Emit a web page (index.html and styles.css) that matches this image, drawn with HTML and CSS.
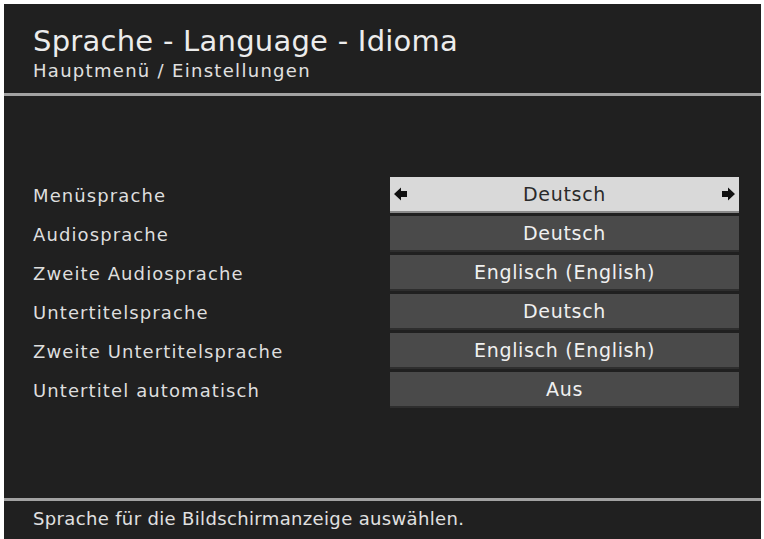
FILE: index.html
```html
<!DOCTYPE html>
<html lang="de">
<head>
    <meta charset="UTF-8">
    <meta name="viewport" content="width=device-width, initial-scale=1.0">
    <title>Sprache - Language - Idioma</title>
    <link rel="stylesheet" href="styles.css">
</head>
<body>

    <div class="screen">
        <div class="header">
            <h1>Sprache - Language - Idioma</h1>
            <p class="path">Hauptmenü / Einstellungen</p>
        </div>

        <div class="settings">
            <div class="row">
                <span class="label">Menüsprache</span>
                <div class="value selected">
                    <svg class="arrow" width="16" height="16" viewBox="0 0 16 16"><path d="M1 8 L8 1.5 L8 5 L14 5 L14 11 L8 11 L8 14.5 Z" fill="#111"/></svg>
                    <span>Deutsch</span>
                    <svg class="arrow" width="16" height="16" viewBox="0 0 16 16"><path d="M15 8 L8 1.5 L8 5 L2 5 L2 11 L8 11 L8 14.5 Z" fill="#111"/></svg>
                </div>
            </div>
            <div class="row">
                <span class="label">Audiosprache</span>
                <div class="value"><span>Deutsch</span></div>
            </div>
            <div class="row">
                <span class="label">Zweite Audiosprache</span>
                <div class="value"><span>Englisch (English)</span></div>
            </div>
            <div class="row">
                <span class="label">Untertitelsprache</span>
                <div class="value"><span>Deutsch</span></div>
            </div>
            <div class="row">
                <span class="label">Zweite Untertitelsprache</span>
                <div class="value"><span>Englisch (English)</span></div>
            </div>
            <div class="row">
                <span class="label">Untertitel automatisch</span>
                <div class="value"><span>Aus</span></div>
            </div>
        </div>

        <div class="footer">
            Sprache für die Bildschirmanzeige auswählen.
        </div>
    </div>

</body>
</html>
```

FILE: styles.css
```css
body {
    margin: 0;
    padding: 0;
    background-color: #ffffff;
    font-family: "DejaVu Sans", "Liberation Sans", sans-serif;
}
.screen {
    margin: 4px 0 0 4px;
    width: 757px;
    height: 535px;
    background-color: #202020;
    display: flex;
    flex-direction: column;
    color: #e6e6e6;
}
.header {
    height: 89px;
    padding-left: 29px;
    border-bottom: 3px solid #a2a2a2;
}
h1 {
    margin: 0;
    padding-top: 19px;
    font-size: 29px;
    font-weight: normal;
    letter-spacing: 0.25px;
    line-height: 36px;
    color: #ececec;
}
.path {
    margin: 0;
    font-size: 18px;
    letter-spacing: 1.3px;
    line-height: 24px;
    color: #e0e0e0;
}
.settings {
    flex: 1;
    padding: 81px 22px 0 29px;
    display: flex;
    flex-direction: column;
    gap: 3px;
}
.row {
    display: flex;
    align-items: center;
    height: 36px;
}
.label {
    width: 357px;
    font-size: 18px;
    letter-spacing: 1.1px;
    color: #dedede;
}
.value {
    width: 349px;
    height: 36px;
    box-sizing: border-box;
    background-color: #4a4a4a;
    border-bottom: 2px solid #2e2e2e;
    display: flex;
    align-items: center;
    justify-content: center;
    font-size: 19px;
    letter-spacing: 0.7px;
    color: #f0f0f0;
}
.value.selected {
    background-color: #d9d9d9;
    color: #2a2a2a;
    justify-content: space-between;
    padding: 0 3px;
    border-bottom: 2px solid #8a8a8a;
}
.footer {
    height: 38px;
    border-top: 3px solid #a2a2a2;
    padding-left: 29px;
    font-size: 18px;
    letter-spacing: 0.35px;
    line-height: 36px;
    color: #e0e0e0;
}
```
